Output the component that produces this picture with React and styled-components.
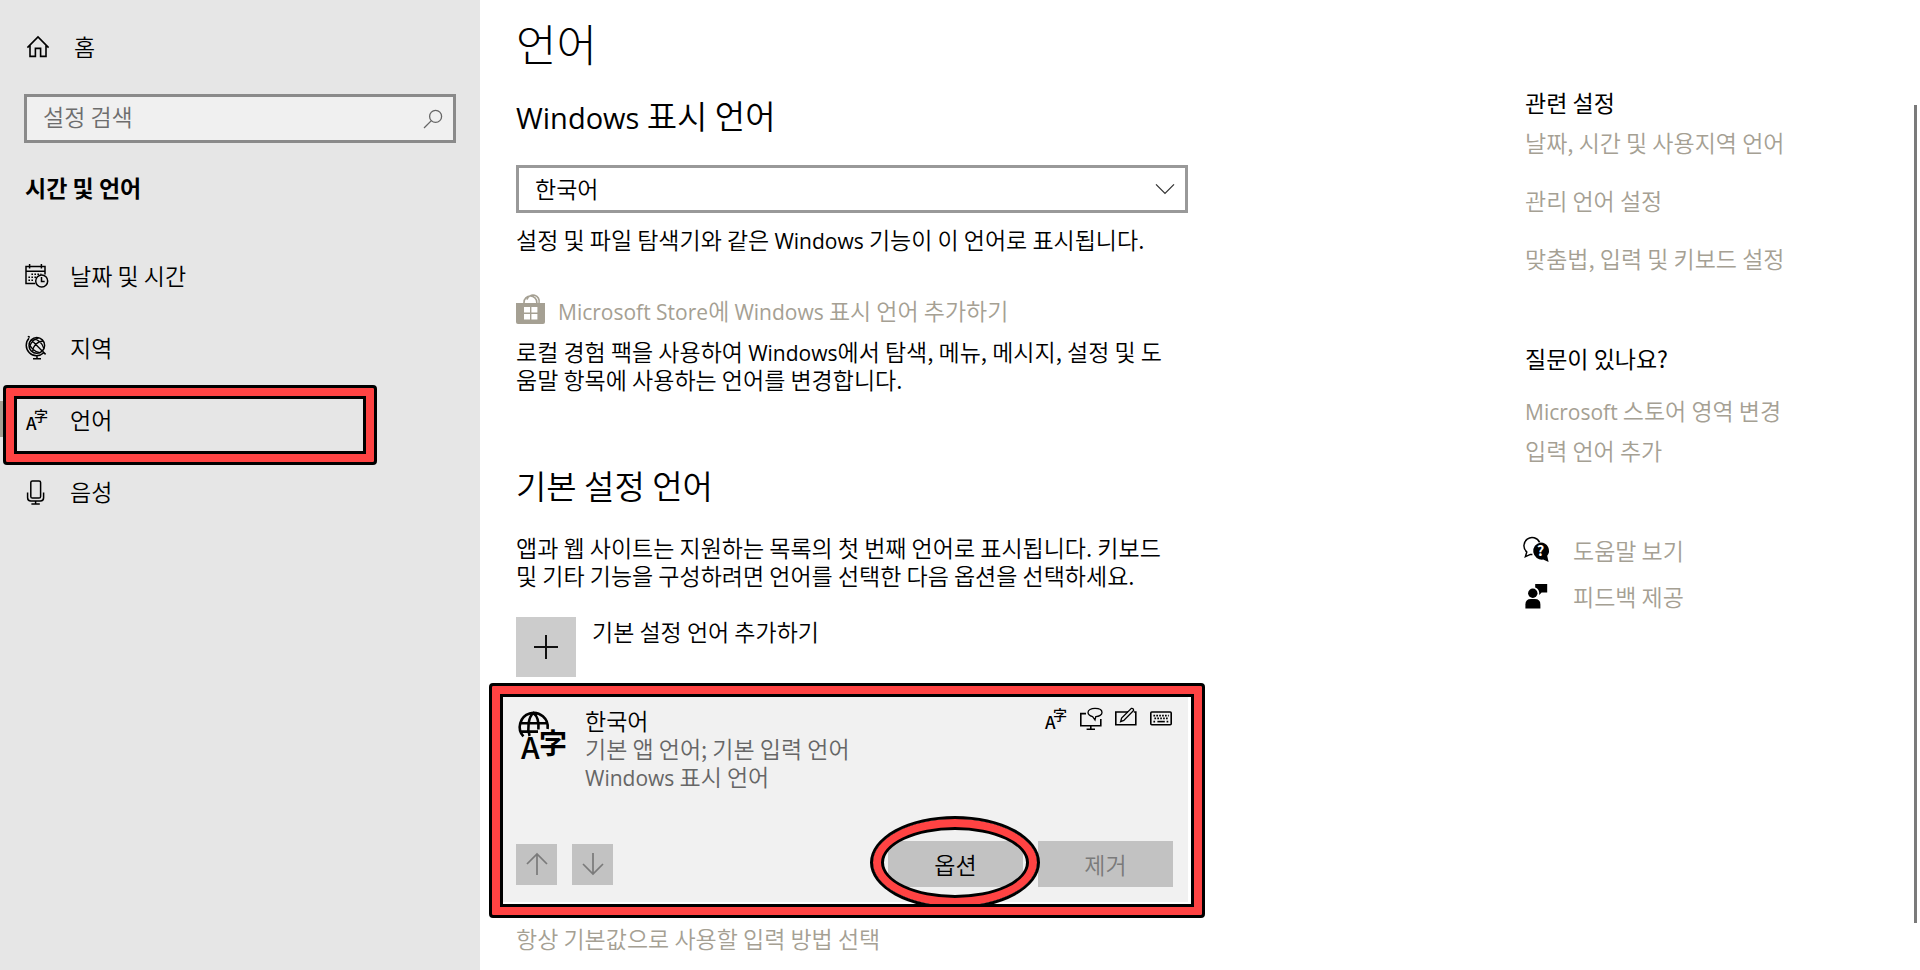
import React, { useState } from "react";
import styled, { createGlobalStyle } from "styled-components";

const GlobalStyle = createGlobalStyle`
  * {
    box-sizing: border-box;
  }

  body {
    margin: 0;
    background: #fff;
    color: #000;
    font-family: "Noto Sans CJK KR", "Noto Sans", sans-serif;
    font-size: 23px;
    font-weight: 350;
    line-height: 28px;
  }

  button, input, select {
    font: inherit;
  }

  svg {
    overflow: visible;
  }
`;

const Page = styled.div`
  display: flex;
  min-height: 100vh;
`;

const Sidebar = styled.aside`
  flex: 0 0 25%;
  padding-top: 23px;
  background: #e6e6e6;
`;

const NavLink = styled.a`
  position: relative;
  display: flex;
  align-items: center;
  gap: ${({ $home }) => ($home ? "24px" : "21px")};
  height: ${({ $home }) => ($home ? "48px" : "72px")};
  padding-left: 25px;
  color: #000;
  text-decoration: none;

  > svg {
    flex: none;
  }
`;

const NavLabel = styled.span`
  padding-bottom: 2px;
`;

const SearchBox = styled.label`
  display: flex;
  align-items: center;
  height: 49px;
  margin: 23px 24px 30px;
  padding: 0 10px 0 16px;
  border: 3px solid #8a8a8a;
  background: #f0f0f0;
`;

const SearchInput = styled.input`
  flex: 1;
  min-width: 0;
  padding: 0 0 5px;
  border: 0;
  outline: 0;
  background: transparent;

  &::placeholder {
    color: #6d6d6d;
    opacity: 1;
  }
`;

const SidebarTitle = styled.h2`
  margin: 0 25px 39px;
  font-size: 23px;
  font-weight: 700;
  line-height: 28px;
`;

const ActiveBar = styled.span`
  position: absolute;
  left: 0;
  top: 17px;
  width: 4px;
  height: 36px;
  background: #a5a093;
`;

/* red marker with a black outline on both sides */
const Marker = styled.span`
  position: absolute;
  z-index: 1;
  border: 3px solid #000;
  border-radius: 4px;
  box-shadow: inset 0 0 0 8px #ff4343, inset 0 0 0 11px #000;
  pointer-events: none;
`;

const NavMarker = styled(Marker)`
  top: 1px;
  left: 3px;
  width: 374px;
  height: 80px;
`;

const CardMarker = styled(Marker)`
  top: -14px;
  right: -17px;
  bottom: -16px;
  left: -14px;
`;

const ButtonMarker = styled(Marker)`
  top: -25px;
  right: -17px;
  bottom: -22px;
  left: -18px;
  border-radius: 50%;
`;

const Main = styled.main`
  flex: 1;
  display: flex;
  justify-content: space-between;
  padding-left: 36px;
`;

const Content = styled.div`
  flex: 0 1 672px;
  padding: 13px 0 16px;
`;

const Title = styled.h1`
  margin: 0 0 20px;
  font-size: 44px;
  font-weight: 300;
  line-height: 60px;
`;

const SectionTitle = styled.h2`
  margin: 0 0 ${({ $gap }) => $gap}px;
  font-size: 33px;
  font-weight: 350;
  line-height: 44px;
`;

const Latin = styled.span`
  font-family: "Open Sans", sans-serif;
  font-size: ${({ $large }) => ($large ? "29px" : "21px")};
  font-weight: 400;
  line-height: 1;
`;

const SelectBox = styled.div`
  position: relative;
  margin-bottom: 12px;

  > svg {
    position: absolute;
    top: 18px;
    right: 13px;
    pointer-events: none;
  }
`;

const Select = styled.select`
  display: block;
  width: 100%;
  height: 48px;
  padding: 0 16px 2px;
  border: 3px solid #999;
  border-radius: 0;
  appearance: none;
  background: #fff;
  color: #000;
`;

const Paragraph = styled.p`
  max-width: 660px;
  margin: 0;
`;

const Link = styled.a`
  color: #a5a093;
  text-decoration: none;
`;

const StoreLink = styled(Link)`
  display: flex;
  align-items: center;
  gap: 13px;
  height: 30px;
  margin: 42px 0 12px;
`;

const PreferredSection = styled.section`
  margin-top: 70px;
`;

const AddLanguage = styled.button`
  display: flex;
  align-items: flex-start;
  gap: 16px;
  margin: 28px 0 20px;
  padding: 0;
  border: 0;
  background: transparent;
  color: #000;
`;

const PlusTile = styled.span`
  display: grid;
  place-items: center;
  width: 60px;
  height: 60px;
  background: #ccc;
`;

const Card = styled.article`
  position: relative;
  display: flex;
  flex-direction: column;
  justify-content: space-between;
  min-height: 205px;
  margin: 0 0 22px -13px;
  padding: 9px 15px 15px 13px;
  background: #f1f1f1;
`;

const CardHeader = styled.div`
  display: flex;
  align-items: flex-start;

  > svg {
    margin: 5px 17px 0 2px;
  }
`;

const CardText = styled.div`
  flex: 1;
  color: #666;
`;

const LanguageName = styled.div`
  color: #000;
`;

const Features = styled.div`
  display: flex;
  gap: 11px;
  padding-top: 1px;
`;

const CardFooter = styled.div`
  display: flex;
  align-items: center;
  gap: 15px;
`;

const MoveButton = styled.button`
  display: grid;
  place-items: center;
  width: 41px;
  height: 41px;
  padding: 0;
  border: 0;
  background: #c2c2c2;
  color: #7a7a7a;
`;

const ActionSlot = styled.div`
  position: relative;
  margin-left: ${({ $push }) => ($push ? "auto" : "0")};
`;

const ActionButton = styled.button`
  display: block;
  width: 135px;
  height: 46px;
  padding: 0;
  border: 0;
  background: #c2c2c2;
  color: #000;

  &:disabled {
    color: #7a7a7a;
  }
`;

const Related = styled.aside`
  flex: 0 0 389px;
  padding-top: 88px;
`;

const RelatedTitle = styled.h3`
  margin: 0 0 ${({ $gap }) => $gap}px;
  font-size: 23px;
  font-weight: 400;
  line-height: 28px;
`;

const LinkList = styled.nav`
  display: flex;
  flex-direction: column;
  align-items: flex-start;
  gap: ${({ $gap }) => $gap}px;
  margin-bottom: ${({ $after }) => $after}px;
`;

const SupportLink = styled(Link)`
  display: flex;
  align-items: center;
  gap: 23px;

  > svg {
    color: #000;
  }
`;

const ScrollThumb = styled.div`
  flex: 0 0 3px;
  margin: 105px 3px 47px 0;
  background: #7a7a7a;
`;

const HomeIcon = () => (
  <svg width="25" height="24" viewBox="0 0 25 24" fill="none" stroke="currentColor" strokeWidth="1.6" aria-hidden="true">
    <path d="M2.4 12.6 13 2l10.6 10.6M5 10.6V21.4h5.4v-8h5.2v8H21V10.6" />
  </svg>
);

const SearchIcon = () => (
  <svg width="20" height="20" viewBox="0 0 20 20" fill="none" stroke="#666" strokeWidth="1.3" aria-hidden="true">
    <circle cx="12.6" cy="7.4" r="6" />
    <path d="M8.4 11.6 1 19" />
  </svg>
);

const CalendarIcon = () => (
  <svg width="24" height="24" viewBox="0 0 24 24" fill="none" stroke="currentColor" strokeWidth="1.5" aria-hidden="true">
    <path d="M10 19.5H1V2.5h19v8M1 7.2h19M4.6 0v4.6M16.4 0v4.6" />
    <path d="M6.4 10.2h10M3.4 13.2h7.6M3.4 16.2h6" strokeDasharray="1.6 1.4" strokeWidth="1.6" />
    <circle cx="16.7" cy="17" r="6" />
    <path d="M16.5 13v4.4h3.2" />
  </svg>
);

const GlobeIcon = () => (
  <svg width="24" height="24" viewBox="0 0 24 24" fill="none" stroke="currentColor" strokeWidth="1.5" aria-hidden="true">
    <circle cx="11.8" cy="9.4" r="7.8" />
    <path d="M4.800 1.200 2.800 .4M4 2.200A10.400 10.400 0 0 0 18.800 16.800M17.600 15.400l3 3M12 20v3M8 22.800h8" />
    <path d="M6.400 4 17.200 15M7.600 15.400C8 10 12 5.400 18 5M4.400 11.600C5.400 7 9 3 13.600 1.800M8 2.800c5 0 9.600 4.600 10.800 9.600M4.200 7.200c1.200 4.800 5.600 8.800 10.600 9.400" strokeWidth="1.300" />
  </svg>
);

const LanguageIcon = () => (
  <svg width="24" height="24" viewBox="0 0 24 24" fill="currentColor" fontWeight="500" aria-hidden="true">
    <text x="1" y="22" fontSize="17" fontFamily="Noto Sans CJK KR">A</text>
    <text x="9" y="12.6" fontSize="14" fontFamily="Noto Sans CJK KR">字</text>
  </svg>
);

const MicIcon = () => (
  <svg width="24" height="25" viewBox="0 0 24 25" fill="none" stroke="currentColor" strokeWidth="1.5" aria-hidden="true">
    <rect x="5.8" y="1" width="9.8" height="17" rx="1.6" />
    <path d="M2.6 12.4v5.4q0 3.2 3.2 3.2h9.6q3.2 0 3.2-3.2v-5.4M10.6 21v3M6.4 24h8.4" />
  </svg>
);

const ChevronIcon = () => (
  <svg width="20" height="12" viewBox="0 0 20 12" fill="none" stroke="#333" strokeWidth="1.3" aria-hidden="true">
    <path d="m1 1.4 9 9 9-9" />
  </svg>
);

const StoreIcon = () => (
  <svg width="29" height="30" viewBox="0 0 29 30" aria-hidden="true">
    <path d="M0 8h29v19q0 2-2 2H2q-2 0-2-2z" fill="#a5a093" />
    <path d="M8 9V7.4a6.4 6.4 0 0 1 12.8 0V9M11 4.6a6 6 0 0 1 12 3.4" fill="none" stroke="#a5a093" strokeWidth="1.6" />
    <path d="M8 12h6v5.600H8zM15.400 12h6v5.600h-6zM8 19h6v5.600H8zM15.400 19h6v5.600h-6z" fill="#fff" />
  </svg>
);

const PlusIcon = () => (
  <svg width="24" height="24" viewBox="0 0 24 24" stroke="#111" strokeWidth="2" aria-hidden="true">
    <path d="M12 0v24M0 12h24" />
  </svg>
);

const GlobeLanguageIcon = () => (
  <svg width="50" height="50" viewBox="0 0 50 50" fill="none" stroke="currentColor" strokeWidth="2.6" aria-hidden="true">
    <path d="M5.400 25.400A14 14 0 1 1 29.600 18M2.400 12.200h27M2 20.600h18M11.600 25C9 17 10.400 6 15.400 2c3.400 2.600 5.600 9 5 16.500" />
    <text x="3" y="48.400" fontSize="30" fontWeight="500" fill="currentColor" stroke="none" fontFamily="Noto Sans CJK KR">A</text>
    <text x="21" y="43" fontSize="28" fontWeight="700" fill="currentColor" stroke="none" fontFamily="Noto Sans CJK KR">字</text>
  </svg>
);

const SpeechIcon = () => (
  <svg width="24" height="24" viewBox="0 0 24 24" fill="none" stroke="currentColor" strokeWidth="1.6" aria-hidden="true">
    <path d="M7 6.600H1.800v12.200h20V12M11.800 19v3M7.600 22.200h8.400" />
    <path d="M13.600 9.600c-3-1-4.600-2.600-4.600-4.200C9 3 12 1.400 16 1.400s7 1.600 7 4-2.800 4.200-6.200 4.200l-.8 3.400z" strokeWidth="1.300" />
  </svg>
);

const HandwritingIcon = () => (
  <svg width="24" height="24" viewBox="0 0 24 24" fill="none" stroke="currentColor" strokeWidth="1.600" aria-hidden="true">
    <path d="M14 5H1.800v12.800h20V5h-2" />
    <path d="m6.600 14.600 1-3.600L17.400 1.400q2.200-.4 2.200 2L9.800 13.400z" strokeWidth="1.300" />
  </svg>
);

const KeyboardIcon = () => (
  <svg width="24" height="24" viewBox="0 0 24 24" fill="none" stroke="currentColor" strokeWidth="1.600" aria-hidden="true">
    <rect x="1.800" y="5" width="20.400" height="12.800" rx="1" />
    <path d="M4.400 8.600h15.400M5.400 11.400h14.400M4.400 14.600h2.400M17.600 14.600H20" strokeDasharray="1.700 1.200" />
    <path d="M8.400 14.600h7.400" />
  </svg>
);

const ArrowIcon = ({ down }) => (
  <svg width="22" height="24" viewBox="0 0 22 24" fill="none" stroke="currentColor" strokeWidth="1.700" aria-hidden="true">
    <path d={down ? "M11 1v21M1 12l10 10 10-10" : "M11 23V2M1 12 11 2l10 10"} />
  </svg>
);

const HelpIcon = () => (
  <svg width="25" height="25" viewBox="0 0 25 25" aria-hidden="true">
    <path d="M14.600 4.400A8.200 8.200 0 1 0 1.800 14l-1.400 4.600 5-2.200h2" fill="none" stroke="currentColor" strokeWidth="1.500" />
    <path d="M15.600 4.400a8.300 8.300 0 0 1 6.600 13.400L23.600 24l-5.400-2.400A8.400 8.400 0 1 1 15.600 4.400z" fill="currentColor" />
    <text x="12" y="18" fontSize="14" fontWeight="700" fill="#fff" fontFamily="Noto Sans CJK KR">?</text>
  </svg>
);

const FeedbackIcon = () => (
  <svg width="25" height="25" viewBox="0 0 25 25" fill="currentColor" aria-hidden="true">
    <path d="M10.200 0h12v8.600h-5.600L14.200 11V8.600q-.6-3.800-4-5z" />
    <circle cx="7.800" cy="9.200" r="4.700" />
    <path d="M.4 24.500v-4q0-5.500 5.500-5.500h4q5.500 0 5.500 5.500v4z" />
  </svg>
);

const navItems = [
  { label: "날짜 및 시간", Icon: CalendarIcon },
  { label: "지역", Icon: GlobeIcon },
  { label: "언어", Icon: LanguageIcon, active: true },
  { label: "음성", Icon: MicIcon },
];

const relatedLinks = ["날짜, 시간 및 사용지역 언어", "관리 언어 설정", "맞춤법, 입력 및 키보드 설정"];

function SettingsNav() {
  const [query, setQuery] = useState("");

  return (
    <Sidebar>
      <NavLink href="#home" $home>
        <HomeIcon />
        <NavLabel>홈</NavLabel>
      </NavLink>

      <SearchBox>
        <SearchInput
          aria-label="설정 검색"
          placeholder="설정 검색"
          value={query}
          onChange={(event) => setQuery(event.target.value)}
        />
        <SearchIcon />
      </SearchBox>

      <SidebarTitle>시간 및 언어</SidebarTitle>

      <nav>
        {navItems.map(({ label, Icon, active }) => (
          <NavLink key={label} href={`#${label}`} aria-current={active ? "page" : undefined}>
            {active && <ActiveBar />}
            <Icon />
            <NavLabel>{label}</NavLabel>
            {active && <NavMarker />}
          </NavLink>
        ))}
      </nav>
    </Sidebar>
  );
}

function LanguageCard() {
  return (
    <Card>
      <CardHeader>
        <GlobeLanguageIcon />
        <CardText>
          <LanguageName>한국어</LanguageName>
          <div>기본 앱 언어; 기본 입력 언어</div>
          <div><Latin>Windows</Latin> 표시 언어</div>
        </CardText>
        <Features>
          <LanguageIcon />
          <SpeechIcon />
          <HandwritingIcon />
          <KeyboardIcon />
        </Features>
      </CardHeader>

      <CardFooter>
        <MoveButton aria-label="위로 이동" disabled><ArrowIcon /></MoveButton>
        <MoveButton aria-label="아래로 이동" disabled><ArrowIcon down /></MoveButton>
        <ActionSlot $push>
          <ActionButton>옵션</ActionButton>
          <ButtonMarker />
        </ActionSlot>
        <ActionSlot>
          <ActionButton disabled>제거</ActionButton>
        </ActionSlot>
      </CardFooter>
      <CardMarker />
    </Card>
  );
}

function App() {
  const [language, setLanguage] = useState("ko");

  return (
    <Page>
      <GlobalStyle />
      <SettingsNav />

      <Main>
        <Content>
          <Title>언어</Title>

          <section>
            <SectionTitle $gap={28}><Latin $large>Windows</Latin> 표시 언어</SectionTitle>
            <SelectBox>
              <Select
                aria-label="Windows 표시 언어"
                value={language}
                onChange={(event) => setLanguage(event.target.value)}
              >
                <option value="ko">한국어</option>
              </Select>
              <ChevronIcon />
            </SelectBox>
            <Paragraph>
              설정 및 파일 탐색기와 같은 <Latin>Windows</Latin> 기능이 이 언어로 표시됩니다.
            </Paragraph>
            <StoreLink href="#store">
              <StoreIcon />
              <span><Latin>Microsoft Store</Latin>에 <Latin>Windows</Latin> 표시 언어 추가하기</span>
            </StoreLink>
            <Paragraph>
              로컬 경험 팩을 사용하여 <Latin>Windows</Latin>에서 탐색, 메뉴, 메시지, 설정 및 도움말 항목에 사용하는 언어를 변경합니다.
            </Paragraph>
          </section>

          <PreferredSection>
            <SectionTitle $gap={26}>기본 설정 언어</SectionTitle>
            <Paragraph>
              앱과 웹 사이트는 지원하는 목록의 첫 번째 언어로 표시됩니다. 키보드 및 기타 기능을 구성하려면 언어를 선택한 다음 옵션을 선택하세요.
            </Paragraph>
            <AddLanguage>
              <PlusTile><PlusIcon /></PlusTile>
              <span>기본 설정 언어 추가하기</span>
            </AddLanguage>
            <LanguageCard />
            <Link href="#input-method">항상 기본값으로 사용할 입력 방법 선택</Link>
          </PreferredSection>
        </Content>

        <Related>
          <RelatedTitle $gap={12}>관련 설정</RelatedTitle>
          <LinkList $gap={30} $after={72}>
            {relatedLinks.map((label) => (
              <Link key={label} href="#related">{label}</Link>
            ))}
          </LinkList>

          <RelatedTitle $gap={24}>질문이 있나요?</RelatedTitle>
          <LinkList $gap={12} $after={72}>
            <Link href="#store-region"><Latin>Microsoft</Latin> 스토어 영역 변경</Link>
            <Link href="#add-input">입력 언어 추가</Link>
          </LinkList>

          <LinkList $gap={18} $after={0}>
            <SupportLink href="#help"><HelpIcon />도움말 보기</SupportLink>
            <SupportLink href="#feedback"><FeedbackIcon />피드백 제공</SupportLink>
          </LinkList>
        </Related>
      </Main>
      <ScrollThumb />
    </Page>
  );
}

export default App;
